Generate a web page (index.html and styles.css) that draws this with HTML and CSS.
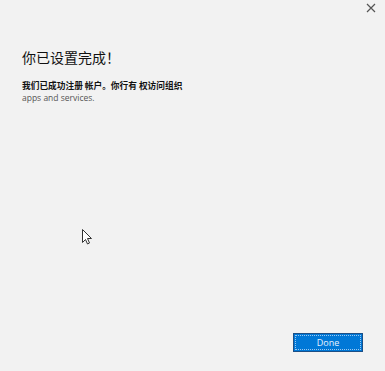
FILE: index.html
```html
<!DOCTYPE html>
<html lang="zh">
<head>
<meta charset="utf-8">
<link rel="stylesheet" href="styles.css">
</head>
<body>
<div class="dialog">
  <div class="titlebar">
    <svg class="close" width="10" height="10" viewBox="0 0 10 10"><path d="M1 1L9 9M9 1L1 9" stroke="#555" stroke-width="1.2"/></svg>
  </div>
  <div class="content">
    <h1 class="title">你已设置完成！</h1>
    <p class="msg">我们已成功注册 帐户。你行有 权访问组织</p>
    <p class="sub">apps and services.</p>
  </div>
  <div class="footer">
    <button class="done">Done</button>
  </div>
  <svg class="cursor" width="12" height="18" viewBox="0 0 12 18"><path d="M0.5 0.5V13.5L3.5 10.5L5.5 15L7.5 14L5.5 9.5H9.5Z" fill="#fff" stroke="#333" stroke-width="1"/></svg>
</div>
</body>
</html>
```
FILE: styles.css
```css
html, body {
  margin: 0;
  padding: 0;
  background: #f2f2f2;
}
.dialog {
  position: relative;
  width: 385px;
  height: 371px;
  display: flex;
  flex-direction: column;
  font-family: "Noto Sans CJK SC", "Liberation Sans", sans-serif;
}
.titlebar {
  height: 14px;
  display: flex;
  justify-content: flex-end;
  padding: 3px 9px 0 0;
}
.close {
  display: block;
}
.content {
  flex: 1;
  padding: 30px 0 0 22px;
}
.title {
  margin: 0;
  font-size: 14px;
  font-weight: normal;
  line-height: 20px;
  color: #111;
}
.msg {
  margin: 13px 0 0;
  font-size: 8.7px;
  line-height: 12px;
  font-weight: bold;
  color: #111;
}
.sub {
  margin: 0;
  font-family: "Open Sans", "Liberation Sans", sans-serif;
  font-size: 8.5px;
  line-height: 11px;
  color: #555;
}
.footer {
  display: flex;
  justify-content: flex-end;
  padding: 0 22px 19px 0;
}
.done {
  width: 70px;
  height: 19px;
  background: #0078d7;
  border: 1px solid #1c4f86;
  outline: 1px dotted #9cc8f0;
  outline-offset: -3px;
  color: #e8f2ff;
  font-family: "Open Sans", "Liberation Sans", sans-serif;
  font-size: 9px;
  padding: 0;
}
.cursor {
  position: absolute;
  left: 82px;
  top: 229px;
}
```
